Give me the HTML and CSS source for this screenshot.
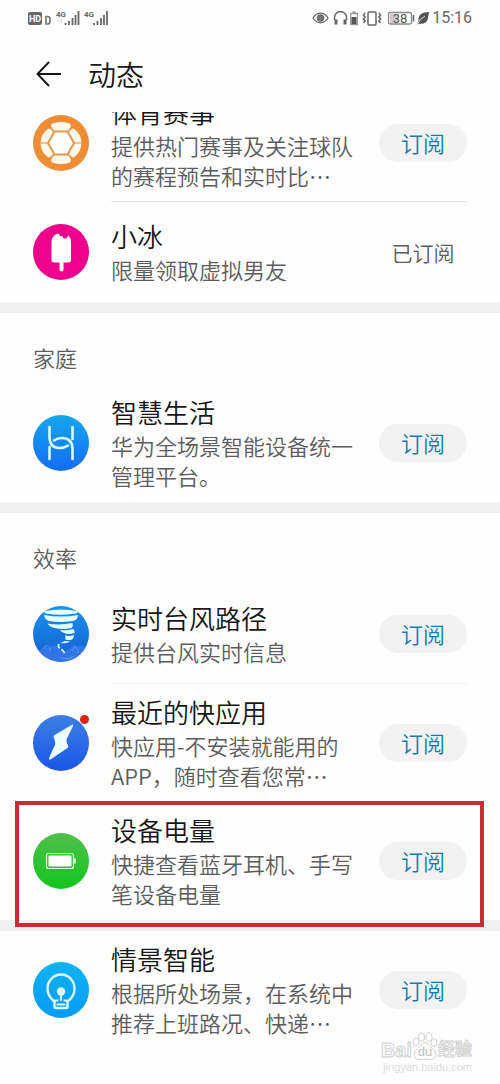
FILE: index.html
```html
<!DOCTYPE html>
<html lang="zh-CN">
<head>
<meta charset="utf-8">
<meta name="viewport" content="width=device-width, initial-scale=1">
<title>动态</title>
<link rel="stylesheet" href="styles.css">
</head>
<body>
<div class="screen">
  <div class="status">
    <div class="status-group">
      <svg width="82" height="18" viewBox="0 0 82 18" role="img" aria-label="HD 4G 4G">
        <rect x="0" y="3" width="14" height="13" rx="2" fill="#666"/>
        <text x="7" y="13" class="tag-hd" text-anchor="middle">HD</text>
        <path d="M18 7.500h1.500q2.500 0 2.500 2.500v2.500q0 2.500-2.500 2.500H18z" fill="none" stroke="#777" stroke-width="1.700"/>
        <text x="28" y="8" class="tag-4g">4G</text>
        <path d="M31 10v4m-1.500-2.500L31 10m2.500 0v4l1.500-1.500" fill="none" stroke="#ddd"/>
        <path d="M37.500 14v2M41 12v4M44.500 9v7M47.500 6v10M50.500 2v14" stroke="#666" stroke-width="1.800"/>
        <text x="56" y="8" class="tag-4g">4G</text>
        <path d="M66 14v2M69.500 12v4M73 9v7M76 6v10M79 2v14" stroke="#666" stroke-width="1.800"/>
      </svg>
    </div>
    <div class="status-group">
      <svg width="118" height="18" viewBox="0 0 118 18" role="img" aria-label="38%">
        <g fill="none" stroke="#666" stroke-width="1.300">
          <path d="M1 9q3-4.800 7.500-4.800T16 9q-3 4.800-7.500 4.800T1 9z"/>
          <circle cx="8.500" cy="9" r="3" fill="#777"/>
          <path d="M22.500 11V8.500a6 6 0 0 1 12 0V11" stroke-width="1.500"/>
          <path d="M24 10.500v5M33 10.500v5" stroke-width="3"/>
          <path d="M38.700 4.500h6.600v11h-6.600zM40.500 3h3" stroke="#999"/>
          <path d="M39.500 8h5v7h-5z" fill="#555" stroke="none"/>
          <rect x="56" y="3" width="8" height="13" rx="1" stroke-width="1.500"/>
          <path d="M53 4l-1.500 2 1.500 2-1.500 2 1.500 2-1.500 2M67 4l1.500 2-1.500 2 1.500 2-1.500 2 1.500 2" stroke-width="1.600"/>
          <rect x="76.500" y="3.500" width="23" height="11.500" rx="1.500" stroke="#888"/>
          <path d="M101.500 6v6.500" stroke-width="1.500"/>
        </g>
        <path d="M78 5h8v9h-8z" fill="#ccc"/>
        <text x="88" y="14" class="tag-level" text-anchor="middle">38</text>
        <path d="M117 3q-11 0-10.500 8.500L105 15.500l2-.8q7.500 1 9-5.500z" fill="#555"/>
        <path d="M105.500 15q2-5 7.500-8" fill="none" stroke="#fefefe" stroke-width=".8"/>
      </svg>
      <time class="clock">15:16</time>
    </div>
  </div>

  <header class="bar">
    <button class="back" type="button" aria-label="返回">
      <svg width="26" height="26" viewBox="0 0 26 26"><path d="M25 13H1.500M13 1L1.500 13 13 25" fill="none" stroke="#161616" stroke-width="1.900"/></svg>
    </button>
    <h1 class="heading">动态</h1>
  </header>

  <main class="feed">
    <section class="group group-scrolled">
      <article class="row row-line">
        <svg class="icon" viewBox="0 0 56 56" aria-hidden="true">
          <circle cx="28" cy="28" r="28" fill="#ef8d34"/>
          <path d="M19 8.500q9-3 18 0l1 3-3.500 5h-13l-3.500-5zM19 47.500q9 3 18 0l1-3-3.500-5h-13l-3.500 5zM15.500 13.500l2 .5 3.500 4L14.500 27.500H7.500q.5-9 8-14zM15.500 42.500l2-.5 3.500-4-6.500-9.500H7.500q.5 9 8 14zM40.500 13.500l-2 .5-3.500 4 6.500 9.500h7q-.5-9-8-14zM40.500 42.500l-2-.5-3.500-4 6.500-9.500h7q-.5 9-8 14z" fill="#fff8ea"/>
          <path d="M21.500 16.500h13L41 28l-6.500 11.500h-13L15 28z" fill="#fff" stroke="#dc9a56" stroke-width="2"/>
        </svg>
        <div class="copy"><h2 class="name">体育赛事</h2><p class="desc">提供热门赛事及关注球队的赛程预告和实时比…</p></div>
        <button class="pill" type="button">订阅</button>
      </article>
      <article class="row">
        <svg class="icon" viewBox="0 0 56 56" aria-hidden="true">
          <circle cx="28" cy="28" r="28" fill="#ec008c"/>
          <path d="M18.500 36V18q0-7 7-8.500 1 3.500 4 2.500 0 3 3 2.500 2-.5 2.500-3 3 2 3 6.500v18q0 2.500-3 2.500H30.500v7q0 2-2 2t-2-2v-7H21q-2.500 0-2.500-2.500z" fill="#fff"/>
        </svg>
        <div class="copy"><h2 class="name">小冰</h2><p class="desc">限量领取虚拟男友</p></div>
        <span class="done">已订阅</span>
      </article>
    </section>

    <section class="group">
      <h2 class="label">家庭</h2>
      <article class="row">
        <svg class="icon" viewBox="0 0 56 56" aria-hidden="true">
          <defs><linearGradient id="home" x2="0" y2="1"><stop stop-color="#16a6ea"/><stop offset="1" stop-color="#146cf8"/></linearGradient></defs>
          <circle cx="28" cy="28" r="28" fill="url(#home)"/>
          <g fill="none" stroke="#d9fbff" stroke-width="2.600" stroke-linecap="round">
            <path d="M16.500 12v10q0 11 10 11 5 0 8.500-2.500M39.500 44V34q0-11-11-11-4 0-7.500 2.500"/>
            <path d="M39.500 12v12M16.500 32v12"/>
          </g>
        </svg>
        <div class="copy"><h3 class="name">智慧生活</h3><p class="desc">华为全场景智能设备统一管理平台。</p></div>
        <button class="pill" type="button">订阅</button>
      </article>
    </section>

    <section class="group">
      <h2 class="label">效率</h2>
      <article class="row row-line row-line-soft">
        <svg class="icon" viewBox="0 0 56 56" aria-hidden="true">
          <defs><linearGradient id="storm" x2="0" y2="1"><stop stop-color="#1794ee"/><stop offset="1" stop-color="#155bd0"/></linearGradient>
          <clipPath id="disc"><circle cx="28" cy="28" r="28"/></clipPath></defs>
          <circle cx="28" cy="28" r="28" fill="url(#storm)"/>
          <g clip-path="url(#disc)">
            <path d="M4 48q4-9 12-6 5-6 10 1 5 5 11-1 3-5 8-2 6-2 8 5L42 58H12z" fill="#3d7df0" opacity=".7"/>
            <path d="M11 43a3 3 0 1 1 5 2M39 45a3 3 0 1 1 5 2M28 52q8 2 13-2" fill="none" stroke="#5c9cff"/>
          </g>
          <path d="M12 5q16-3 32 0 1.500 1.500-1 2.500-15 2.500-30 0-2.500-1-1-2.500z" fill="#e9ffff"/>
          <path d="M11 9q17 3 34 0 0 5-5 6-13 2-24 0-4-1-5-6zM14.500 17.500q12 2 25-.5 1 3-1 5-8 2-17 0-5-1-7-4.500zM27 24q7 1 13-1 2 1 1.500 4-5 1.500-9 .5-4-1-5.500-3.500zM32 29.500q5 1 9-.5 0 3-2 4.500-3.500 1-6.500 0 0-2-.5-4zM31.500 35q3 .5 6 0-3 3-10.500 2 3-.5 4.500-2z" fill="#e3fdff"/>
          <path d="M26 38q-2 3 2 5 3 2 4 5" fill="none" stroke="#d6f6ff" stroke-width="1.700" stroke-dasharray="5 1.500"/>
        </svg>
        <div class="copy"><h3 class="name">实时台风路径</h3><p class="desc">提供台风实时信息</p></div>
        <button class="pill" type="button">订阅</button>
      </article>
      <article class="row">
        <div class="icon-wrap">
          <svg class="icon" viewBox="0 0 56 56" aria-hidden="true">
            <defs><linearGradient id="quick" x2="0" y2="1"><stop stop-color="#3c7fe4"/><stop offset="1" stop-color="#1c55e8"/></linearGradient></defs>
            <circle cx="28" cy="28" r="28" fill="url(#quick)"/>
            <path d="M39.500 9.500L21.500 20q-1.500 1-.7 2.500Q24 29 20 34L16 43q-.5 2 1.500 1.500l17-11.500q1.500-1 .5-2.500-3-5 0-9l5-10.500q.5-1.800-.5-1.500z" fill="#ebffff"/>
          </svg>
          <span class="dot"></span>
        </div>
        <div class="copy"><h3 class="name">最近的快应用</h3><p class="desc">快应用-不安装就能用的APP，随时查看您常…</p></div>
        <button class="pill" type="button">订阅</button>
      </article>
      <article class="row row-marked">
        <svg class="icon" viewBox="0 0 56 56" aria-hidden="true">
          <defs><linearGradient id="power" x2="0" y2="1"><stop stop-color="#4fc04c"/><stop offset="1" stop-color="#12c51c"/></linearGradient></defs>
          <circle cx="28" cy="28" r="28" fill="url(#power)"/>
          <rect x="13.500" y="20.500" width="27" height="15" rx="2" fill="none" stroke="#dcffd8" stroke-width="1.200"/>
          <rect x="15.500" y="22.500" width="23" height="11" rx=".8" fill="#fff"/>
          <path d="M42 25.500v5" stroke="#dcffd8" stroke-width="1.700"/>
        </svg>
        <div class="copy"><h3 class="name">设备电量</h3><p class="desc">快捷查看蓝牙耳机、手写笔设备电量</p></div>
        <button class="pill" type="button">订阅</button>
      </article>
    </section>

    <section class="group">
      <article class="row">
        <svg class="icon" viewBox="0 0 56 56" aria-hidden="true">
          <defs><linearGradient id="scene" x2="0" y2="1"><stop stop-color="#13b3ee"/><stop offset="1" stop-color="#039cfa"/></linearGradient></defs>
          <circle cx="28" cy="28" r="28" fill="url(#scene)"/>
          <g fill="none" stroke="#dcfcff" stroke-width="2.400" stroke-linejoin="round">
            <path d="M21.500 45v-5.500q-7-5-7-13a13.500 14 0 0 1 27 0q0 8-7 13V45q0 1-1 1h-11q-1 0-1-1z"/>
            <path d="M21.500 38.500h4M30.500 38.500h4M28 30v9M23.500 42.500h9" stroke-width="1.800"/>
          </g>
          <circle cx="28" cy="29.500" r="4.200" fill="#dcfcff"/>
        </svg>
        <div class="copy"><h2 class="name">情景智能</h2><p class="desc">根据所处场景，在系统中推荐上班路况、快递…</p></div>
        <button class="pill" type="button">订阅</button>
      </article>
    </section>
  </main>

  <div class="watermark">
    <div class="brand">
      <span>Bai</span>
      <svg width="26" height="28" viewBox="0 0 26 28" aria-hidden="true">
        <g fill="#fff" stroke="#d0d0d0">
          <ellipse cx="4" cy="10" rx="3" ry="4"/><ellipse cx="9.500" cy="5" rx="3" ry="4.200"/><ellipse cx="17" cy="5" rx="3" ry="4.200"/><ellipse cx="22" cy="10.500" rx="3" ry="4"/>
          <path d="M13 10.500q3 0 5 4 6 4 6 8 0 5-6 5-5-1-10 0-6 0-6-5 0-4 6-8 2-4 5-4z"/>
        </g>
        <text x="13" y="24" text-anchor="middle" class="brand-du">du</text>
      </svg>
      <span class="brand-cn">经验</span>
    </div>
    <span class="site">jingyan.baidu.com</span>
  </div>
</div>
</body>
</html>
```
FILE: styles.css
```css
* { box-sizing: border-box; }

body {
  margin: 0;
  background: #fefefe;
  color: #161616;
  font-family: "Noto Sans CJK SC", "Noto Sans", sans-serif;
  font-weight: 350;
}

h1, h2, h3, p { margin: 0; font-weight: inherit; }
button { padding: 0; border: 0; background: none; font: inherit; cursor: pointer; }
svg { display: block; flex: none; }

.screen {
  position: relative;
  min-height: 100vh;
  overflow: hidden;
}

.status {
  display: flex;
  justify-content: space-between;
  align-items: center;
  height: 36px;
  padding: 0 28px;
}
.status-group { display: flex; align-items: center; gap: 2px; }
.clock { font: 400 16px/18px Roboto, sans-serif; color: #666; }
.tag-hd { font: 700 9px Roboto, sans-serif; fill: #fff; }
.tag-4g { font: 700 8px Roboto, sans-serif; fill: #666; }
.tag-level { font: 400 13px Roboto, sans-serif; fill: #555; }

.bar {
  display: flex;
  align-items: center;
  gap: 26px;
  height: 76px;
  padding: 0 36px;
}
.back { display: block; }
.heading { font-size: 28px; line-height: 40px; }

.feed { overflow: hidden; }
.group + .group { border-top: 11px solid #f0f0f0; }
.group-scrolled { margin-top: -28px; }

.label {
  height: 71px;
  padding: 29px 33px 0;
  font-size: 22px;
  line-height: 30px;
  color: #5c5c5c;
}

.row {
  position: relative;
  display: flex;
  align-items: center;
  gap: 22px;
  min-height: 100px;
  padding: 10px 33px;
}
.row-line::after {
  content: "";
  position: absolute;
  right: 33px;
  bottom: 0;
  left: 111px;
  height: 1px;
  background: #e6e6e6;
}
.row-line-soft::after { background: #f2f2f2; }
.row-marked::before {
  content: "";
  position: absolute;
  inset: -1px 16px -7px 15px;
  border: 4px solid #c92c35;
  pointer-events: none;
}
.row-marked { z-index: 1; }

.icon { width: 56px; height: 56px; flex: none; }
.icon-wrap { position: relative; flex: none; }
.dot {
  position: absolute;
  top: 0;
  right: 0;
  width: 9px;
  height: 9px;
  border-radius: 50%;
  background: #dc2415;
}

.copy { flex: 1; min-width: 0; padding-bottom: 2px; }
.name { font-size: 26px; line-height: 36px; }
.desc { font-size: 22px; line-height: 30px; color: #5c5c5c; }

.pill {
  flex: none;
  width: 88px;
  height: 38px;
  padding-bottom: 2px;
  border-radius: 19px;
  background: #f2f2f2;
  color: #147ab4;
  font-size: 22px;
  line-height: 36px;
}
.done {
  flex: none;
  width: 88px;
  text-align: center;
  font-size: 21px;
  line-height: 30px;
  color: #5c5c5c;
}

.watermark {
  position: absolute;
  right: 28px;
  bottom: 10px;
  display: flex;
  flex-direction: column;
  align-items: flex-end;
}
.brand {
  display: flex;
  align-items: flex-end;
  font: 700 20px/20px "Liberation Sans", "Noto Sans CJK SC", sans-serif;
  color: #fff;
  -webkit-text-stroke: 1px #d0d0d0;
}
.brand-cn { font-size: 17px; }
.brand-du { font: 400 13px "Liberation Sans", sans-serif; fill: #bbb; -webkit-text-stroke: 0; }
.site { font: 400 11px/14px "Liberation Sans", sans-serif; color: #dcdcdc; }
```
